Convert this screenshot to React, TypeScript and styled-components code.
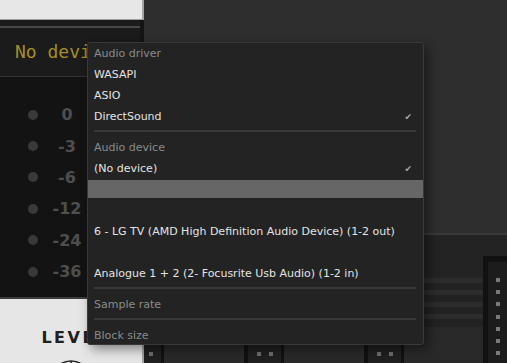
import React from 'react';
import styled, { createGlobalStyle } from 'styled-components';

const meterMarks = ['0', '-3', '-6', '-12', '-24', '-36'];

type MenuEntry =
  | { kind: 'header'; label: string }
  | { kind: 'item'; label: string; checked?: boolean; hovered?: boolean }
  | { kind: 'separator' };

const menuEntries: MenuEntry[] = [
  { kind: 'header', label: 'Audio driver' },
  { kind: 'item', label: 'WASAPI' },
  { kind: 'item', label: 'ASIO' },
  { kind: 'item', label: 'DirectSound', checked: true },
  { kind: 'separator' },
  { kind: 'header', label: 'Audio device' },
  { kind: 'item', label: '(No device)', checked: true },
  { kind: 'item', label: '', hovered: true },
  { kind: 'item', label: '' },
  { kind: 'item', label: '6 - LG TV (AMD High Definition Audio Device) (1-2 out)' },
  { kind: 'item', label: '' },
  { kind: 'item', label: 'Analogue 1 + 2 (2- Focusrite Usb Audio) (1-2 in)' },
  { kind: 'separator' },
  { kind: 'header', label: 'Sample rate' },
  { kind: 'separator' },
  { kind: 'header', label: 'Block size' },
];

const App: React.FC = () => (
  <>
    <GlobalStyle />
    <Page>
      <Sidebar>
        <TitleCard>
          <TitleText>AUDIO</TitleText>
        </TitleCard>
        <DisplayBlock>
          <Readout>No device</Readout>
        </DisplayBlock>
        <MeterPanel>
          {meterMarks.map(mark => (
            <MeterRow key={mark}>
              <MeterLed />
              <MeterLabel>{mark}</MeterLabel>
            </MeterRow>
          ))}
        </MeterPanel>
        <LevelPanel>
          <LevelTitle>LEVEL</LevelTitle>
          <Knob width="44" height="44" viewBox="0 0 44 44">
            <circle cx="22" cy="22" r="20" fill="none" stroke="#222" strokeWidth="1.5" />
            <line x1="22" y1="2" x2="22" y2="22" stroke="#222" strokeWidth="1.5" />
          </Knob>
        </LevelPanel>
      </Sidebar>

      <Workspace>
        <UpperArea />
        <LowerArea>
          <Lanes>
            <LaneSpacer />
            {[0, 1, 2, 3].map(i => (
              <Stripe key={i} />
            ))}
            <Track>
              <SlotRow>
                {[0, 1, 2].map(i => (
                  <Slot key={i}>
                    <SlotDot />
                    <SlotDot />
                  </Slot>
                ))}
              </SlotRow>
            </Track>
          </Lanes>
          <SideStrip>
            {[0, 1, 2, 3, 4, 5, 6, 7].map(i => (
              <StripDot key={i} />
            ))}
          </SideStrip>
        </LowerArea>
      </Workspace>

      <Menu>
        {menuEntries.map((entry, i) => {
          if (entry.kind === 'separator') return <Separator key={i} />;
          if (entry.kind === 'header') return <MenuHeader key={i}>{entry.label}</MenuHeader>;
          return (
            <MenuItem key={i} $hovered={entry.hovered}>
              <span>{entry.label}</span>
              {entry.checked && <Check>✔</Check>}
            </MenuItem>
          );
        })}
      </Menu>
    </Page>
  </>
);

export default App;

const GlobalStyle = createGlobalStyle`
  html, body {
    margin: 0;
    padding: 0;
    background: #2e2e2e;
    overflow: hidden;
  }
  * {
    box-sizing: border-box;
  }
`;

const Page = styled.div`
  position: relative;
  display: flex;
  width: 507px;
  height: 363px;
  overflow: hidden;
  font-family: 'DejaVu Sans', 'Liberation Sans', sans-serif;
`;

const Sidebar = styled.div`
  display: flex;
  flex-direction: column;
  width: 144px;
  flex-shrink: 0;
  min-height: 0;
`;

const TitleCard = styled.div`
  flex-shrink: 0;
  height: 20px;
  background: #e7e7e7;
  border-right: 2px solid #a4a4a4;
  border-bottom: 1px solid #9c9c9c;
  overflow: hidden;
  padding-left: 24px;
`;

const TitleText = styled.div`
  margin-top: -28px;
  font-weight: bold;
  font-size: 30px;
  letter-spacing: 2px;
  line-height: 1;
  color: #111;
`;

const DisplayBlock = styled.div`
  flex-shrink: 0;
  height: 57px;
  padding-top: 6px;
  background: #1b1b1b;
  border-right: 4px solid #141414;
  border-bottom: 1px solid #333;
  display: flex;
  flex-direction: column;
`;

const Readout = styled.div`
  flex: 1;
  display: flex;
  align-items: center;
  padding-left: 15px;
  padding-bottom: 2px;
  border-top: 2px solid #474747;
  font-family: 'DejaVu Sans Mono', monospace;
  font-size: 18px;
  color: #a48e22;
  white-space: nowrap;
`;

const MeterPanel = styled.div`
  flex-shrink: 0;
  height: 222px;
  padding-top: 22px;
  background: #131313;
  border-right: 4px solid #0e0e0e;
  border-bottom: 2px solid #3c3c3c;
`;

const MeterRow = styled.div`
  display: flex;
  align-items: center;
  height: 31.4px;
  padding-left: 28px;
`;

const MeterLed = styled.div`
  width: 10px;
  height: 10px;
  border-radius: 50%;
  background: #393939;
`;

const MeterLabel = styled.div`
  width: 40px;
  margin-left: 9px;
  text-align: center;
  font-weight: bold;
  font-size: 16px;
  color: #4e4e4e;
`;

const LevelPanel = styled.div`
  flex: 1;
  min-height: 0;
  overflow: hidden;
  display: flex;
  flex-direction: column;
  align-items: center;
  background: #e6e6e6;
  border-right: 2px solid #a4a4a4;
  padding-top: 29px;
`;

const LevelTitle = styled.div`
  flex-shrink: 0;
  font-weight: bold;
  font-size: 16px;
  letter-spacing: 2.5px;
  color: #202020;
  padding-left: 8px;
`;

const Knob = styled.svg`
  display: block;
  margin-top: 12px;
  flex-shrink: 0;
`;

const Workspace = styled.div`
  flex: 1;
  min-height: 0;
  display: flex;
  flex-direction: column;
`;

const UpperArea = styled.div`
  flex-shrink: 0;
  height: 235px;
  background: #2e2e2e;
  border-bottom: 2px solid #393939;
`;

const LowerArea = styled.div`
  flex: 1;
  min-height: 0;
  overflow: hidden;
  display: flex;
  background: #232323;
`;

const Lanes = styled.div`
  flex: 1;
  display: flex;
  flex-direction: column;
`;

const LaneSpacer = styled.div`
  flex-shrink: 0;
  height: 43px;
`;

const Stripe = styled.div`
  flex-shrink: 0;
  height: 12px;
  border-top: 5px solid #2c2c2c;
  background: #222;
`;

const Track = styled.div`
  flex: 1;
  display: flex;
  flex-direction: column;
  justify-content: flex-end;
  margin-top: 1px;
  background: #292929;
  overflow: hidden;
`;

const SlotRow = styled.div`
  display: flex;
  gap: 80px;
  height: 18px;
  flex-shrink: 0;
  margin-left: -20px;
`;

const Slot = styled.div`
  display: flex;
  align-items: center;
  justify-content: center;
  gap: 8px;
  width: 40px;
  background: #202020;
  border-left: 4px solid #111;
  border-right: 3px solid #111;
`;

const SlotDot = styled.div`
  width: 4px;
  height: 4px;
  background: #6e6e6e;
`;

const SideStrip = styled.div`
  flex-shrink: 0;
  width: 24px;
  margin-top: 21px;
  padding-top: 16px;
  display: flex;
  flex-direction: column;
  align-items: center;
  gap: 8.2px;
  background: #1c1c1c;
  border-top: 6px solid #111;
  border-left: 5px solid #111;
`;

const StripDot = styled.div`
  width: 4px;
  height: 4px;
  flex-shrink: 0;
  background: #7a7a7a;
`;

const Menu = styled.div`
  position: absolute;
  left: 87px;
  top: 42px;
  width: 337px;
  height: 303px;
  overflow: hidden;
  background: #232323;
  border: 1px solid #393939;
  border-radius: 3px;
  box-shadow: 4px 4px 12px rgba(0, 0, 0, 0.45);
  font-size: 11px;
`;

const MenuHeader = styled.div`
  display: flex;
  align-items: center;
  height: 21px;
  padding-left: 6px;
  color: #8b8b8b;
`;

const MenuItem = styled.div<{ $hovered?: boolean }>`
  display: flex;
  align-items: center;
  justify-content: space-between;
  height: ${p => (p.$hovered ? '18px' : '21px')};
  margin: ${p => (p.$hovered ? '1px 0 2px' : '0')};
  padding: 0 11px 0 6px;
  color: #e4e4e4;
  background: ${p => (p.$hovered ? '#666' : 'transparent')};
  white-space: nowrap;
`;

const Check = styled.span`
  font-size: 9px;
  color: #a8a8a8;
`;

const Separator = styled.div`
  height: 2px;
  margin: 3px 7px 5px 6px;
  background: #383838;
`;
